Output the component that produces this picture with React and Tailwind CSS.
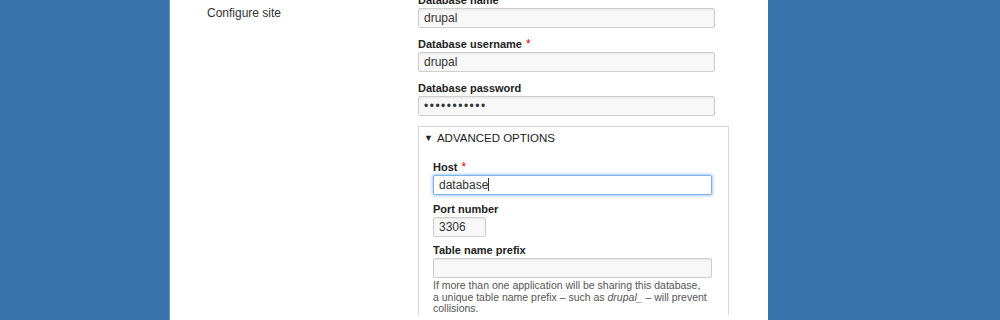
const Label = ({ children, required }) => (
  <label className="block text-[11px] leading-[13px] font-bold text-[#222] mb-px">
    {children}
    {required && <span className="text-[#e00000] font-normal text-[12px] ml-[4px] align-top leading-[12px]">*</span>}
  </label>
)

const TextInput = ({ value, width = 'w-[297px]', focus, className = '' }) => (
  <div
    className={`${width} h-[20px] rounded-[2px] border px-[5px] text-[12px] leading-[18px] text-[#333] ${className} ${
      focus
        ? 'border-[#7fb3e8] bg-white shadow-[0_0_3px_1px_rgba(90,160,240,0.55)]'
        : 'border-[#cfcfcf] bg-[#f8f8f8] shadow-[inset_0_1px_2px_rgba(0,0,0,0.08)]'
    }`}
  >
    {value}
    {focus && <span className="inline-block w-px h-[13px] bg-[#333] align-[-2px]" />}
  </div>
)

export default function App() {
  return (
    <div className="w-[1000px] h-[320px] overflow-hidden bg-[#3873ab] font-['Liberation_Sans',Arial,sans-serif]">
      <div className="ml-[169px] w-[599px] h-full bg-white border-l border-l-[#5a9ad8] flex">
        {/* Sidebar */}
        <div className="w-[248px] pl-[37px] pt-[6px] text-[12px] leading-[14px] text-[#333]">
          Configure site
        </div>

        {/* Form */}
        <div className="mt-[-6px] flex flex-col">
          <div>
            <Label>Database name</Label>
            <TextInput value="drupal" />
          </div>
          <div className="mt-[10px]">
            <Label required>Database username</Label>
            <TextInput value="drupal" />
          </div>
          <div className="mt-[10px]">
            <Label>Database password</Label>
            <TextInput value="•••••••••••" className="tracking-[1.5px]" />
          </div>

          <div className="mt-[10px] w-[311px] border border-[#d8d8d8] border-b-0">
            <div className="flex items-center pl-[5px] pt-[4px] text-[11.5px] leading-[14px] text-[#222]">
              <span className="text-[9px] leading-[10px] mr-[4px]">▼</span>
              <span>ADVANCED OPTIONS</span>
            </div>

            <div className="pl-[14px] pt-[16px]">
              <div>
                <Label required>Host</Label>
                <TextInput value="database" width="w-[279px]" focus />
              </div>
              <div className="mt-[8px]">
                <Label>Port number</Label>
                <TextInput value="3306" width="w-[53px]" />
              </div>
              <div className="mt-[7px]">
                <Label>Table name prefix</Label>
                <TextInput value="" width="w-[279px]" />
                <p className="mt-[2px] text-[10.5px] leading-[11.5px] text-[#555] whitespace-nowrap">
                  If more than one application will be sharing this database,
                  <br />
                  a unique table name prefix – such as <em>drupal_</em> – will prevent
                  <br />
                  collisions.
                </p>
              </div>
            </div>
          </div>
        </div>
      </div>
    </div>
  )
}
